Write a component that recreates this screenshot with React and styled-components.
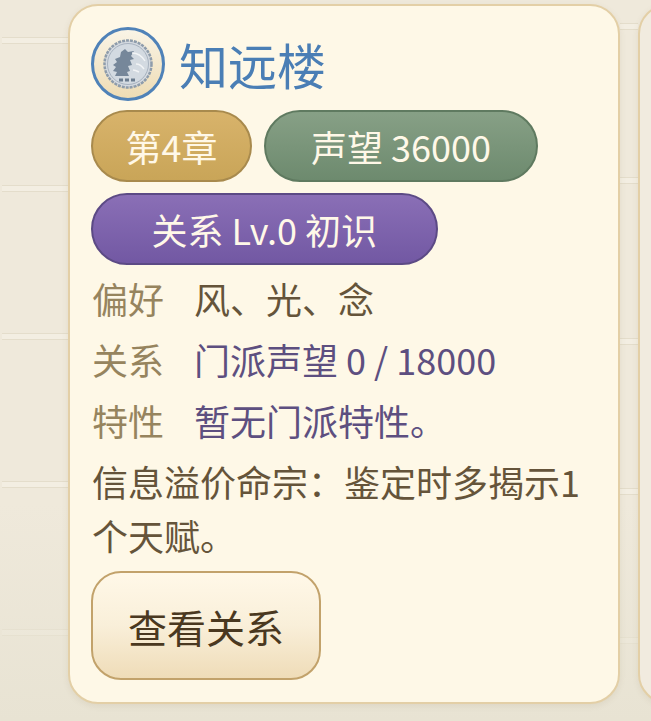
import React from "react";
import styled, { createGlobalStyle } from "styled-components";

const GlobalStyle = createGlobalStyle`
  html, body {
    margin: 0;
    padding: 0;
  }
  body {
    width: 651px;
    height: 721px;
    overflow: hidden;
    font-family: "Noto Sans CJK SC", "Noto Sans", sans-serif;
    background-color: #efe9db;
  }
`;

const plank = `linear-gradient(
  180deg,
  #e4ddcb 0 1px,
  #f3eee2 1px 6px,
  #e4ddcb 6px 7px
)`;

// the boards behind the cards do not sit at the same height on the two sides
const LEFT_BOARDS = [37, 185, 333, 481, 629];
const GAP_BOARDS = [23, 177, 338, 488, 637];

const boards = [...LEFT_BOARDS, ...GAP_BOARDS];

const Wall = styled.div`
  height: 721px;
  box-sizing: border-box;
  padding: 4px 0 0 68px;
  display: flex;
  align-items: flex-start;
  gap: 18px;
  overflow: hidden;
  background-image:
    linear-gradient(180deg, rgba(230, 225, 208, 0) 70%, #e8e3d3 100%),
    ${boards.map(() => plank).join(",")};
  background-size:
    100% 100%,
    ${LEFT_BOARDS.map(() => "70px 7px").join(",")},
    ${GAP_BOARDS.map(() => "18px 7px").join(",")};
  background-position:
    0 0,
    ${LEFT_BOARDS.map((y) => `2px ${y}px`).join(",")},
    ${GAP_BOARDS.map((y) => `620px ${y}px`).join(",")};
  background-repeat: no-repeat;
`;

const Card = styled.section`
  width: 552px;
  height: 700px;
  flex: none;
  box-sizing: border-box;
  padding: 21px 21px 0;
  background: #fef8e7;
  border: 2px solid #e3cfa6;
  border-radius: 30px;
  box-shadow: 0 2px 6px rgba(120, 100, 60, 0.1);
`;

const NextCard = styled(Card)`
  background: #f1ebdf;
`;

const Header = styled.header`
  display: flex;
  align-items: center;
  gap: 14px;
  height: 74px;
`;

const Emblem = styled.div`
  width: 74px;
  height: 74px;
  box-sizing: border-box;
  border: 3px solid #4f82b8;
  border-radius: 50%;
  background: linear-gradient(180deg, #f9f4e6 0%, #eedcb4 100%);
  display: flex;
  align-items: center;
  justify-content: center;
`;

const Name = styled.h2`
  margin: 0;
  font-size: 49px;
  line-height: 74px;
  font-weight: 400;
  color: #4a7eb5;
`;

const Tags = styled.div`
  display: flex;
  flex-wrap: wrap;
  gap: 11px 12px;
  margin-top: 9px;
`;

const TAG_COLORS = {
  gold: ["#d8b36b", "#c9a558", "#a88a4d"],
  green: ["#87a086", "#6d8a6e", "#5f7a60"],
  purple: ["#8a6fb6", "#7258a3", "#5c4a85"],
};

const Tag = styled.span`
  height: 72px;
  box-sizing: border-box;
  padding: 0 ${(p) => p.$pad}px;
  display: inline-flex;
  align-items: center;
  border-radius: 36px;
  border: 2px solid ${(p) => TAG_COLORS[p.$tone][2]};
  background: linear-gradient(
    180deg,
    ${(p) => TAG_COLORS[p.$tone][0]},
    ${(p) => TAG_COLORS[p.$tone][1]}
  );
  color: #fff8e8;
  font-size: 36px;
  white-space: pre;
`;

const Rows = styled.div`
  margin-top: 2px;
  padding-left: 1px;
`;

const Row = styled.div`
  display: flex;
  gap: 30px;
  height: 61px;
  align-items: center;
  font-size: 36px;
`;

const Label = styled.span`
  width: 72px;
  flex: none;
  white-space: nowrap;
  color: #96845e;
`;

const Value = styled.span`
  color: ${(p) => (p.$accent ? "#5d4f80" : "#65543a")};
`;

const Note = styled.p`
  margin: 4px 0 0;
  padding-left: 1px;
  font-size: 36px;
  line-height: 54px;
  color: #65543a;
`;

const ActionButton = styled.button`
  display: block;
  width: 230px;
  height: 109px;
  margin-top: 9px;
  padding: 0;
  border: 2px solid #c2a26b;
  border-radius: 30px;
  background: linear-gradient(180deg, #fff8e8 0%, #f9efd9 50%, #efdcb8 100%);
  color: #4a3820;
  font-family: inherit;
  font-size: 39px;
`;

// silver medallion with a small tower on it
const Coin = () => (
  <svg width="50" height="50" viewBox="0 0 50 50">
    <circle cx="25" cy="25" r="23.5" fill="#d5dae0" stroke="#8e9cab" strokeWidth="2.5" strokeDasharray="3 1" />
    <circle cx="25" cy="25" r="20.5" fill="#d3dae1" stroke="#a8b3c0" strokeWidth="1" />
    <path
      d="M22 10l3 3 6-1-3 5 3 3-4 1 2 5-4 1 2 5-3 1 2 4H12l2-4-4-1 3-4-3-2 4-3-2-3 5-2 1-5z"
      fill="#76879a"
    />
    <path d="M29 14c5 0 10 3 13 8M33 25c3 0 6 2 8 5M30 31c2 0 4 1 6 2" fill="none" stroke="#f2f4f6" strokeWidth="1.4" />
    <path d="M16 41h18" stroke="#6b7c8f" strokeWidth="3" strokeDasharray="4 2" />
  </svg>
);

export default function App() {
  return (
    <Wall>
      <GlobalStyle />
      <Card>
        <Header>
          <Emblem>
            <Coin />
          </Emblem>
          <Name>知远楼</Name>
        </Header>
        <Tags>
          <Tag $tone="gold" $pad={32.5}>第4章</Tag>
          <Tag $tone="green" $pad={45}>声望 36000</Tag>
          <Tag $tone="purple" $pad={58.5}>关系 Lv.0 初识</Tag>
        </Tags>
        <Rows>
          <Row>
            <Label>偏好</Label>
            <Value>风、光、念</Value>
          </Row>
          <Row>
            <Label>关系</Label>
            <Value $accent>门派声望 0 / 18000</Value>
          </Row>
          <Row>
            <Label>特性</Label>
            <Value $accent>暂无门派特性。</Value>
          </Row>
        </Rows>
        <Note>信息溢价命宗：鉴定时多揭示1个天赋。</Note>
        <ActionButton>查看关系</ActionButton>
      </Card>
      <NextCard />
    </Wall>
  );
}
